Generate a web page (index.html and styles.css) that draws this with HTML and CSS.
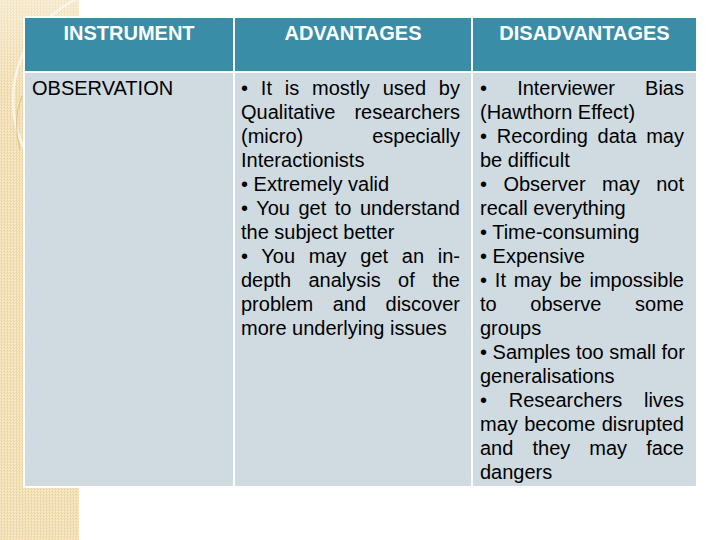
FILE: index.html
```html
<!DOCTYPE html>
<html lang="en">
<head>
<meta charset="utf-8">
<title>Observation</title>
<link rel="stylesheet" href="styles.css">
</head>
<body>
<div class="deco">
  <svg class="arc" width="79" height="540" viewBox="0 0 79 540">
    <circle cx="125" cy="100" r="112" fill="none" stroke="#fbf6ec" stroke-width="2.5" opacity="0.9"/>
    <path d="M22 96 Q12 120 20 150" fill="none" stroke="#d8c08e" stroke-width="1"/>
  </svg>
</div>
<div class="table">
  <div class="cell head">INSTRUMENT</div>
  <div class="cell head">ADVANTAGES</div>
  <div class="cell head">DISADVANTAGES</div>
  <div class="cell body c1">OBSERVATION</div>
  <div class="cell body c2">
    <div class="ln j">• It is mostly used by</div>
    <div class="ln j">Qualitative researchers</div>
    <div class="ln j">(micro) especially</div>
    <div class="ln">Interactionists</div>
    <div class="ln">• Extremely valid</div>
    <div class="ln j">• You get to understand</div>
    <div class="ln">the subject better</div>
    <div class="ln j">• You may get an in-</div>
    <div class="ln j">depth analysis of the</div>
    <div class="ln j">problem and discover</div>
    <div class="ln">more underlying issues</div>
  </div>
  <div class="cell body c3">
    <div class="ln j">• Interviewer Bias</div>
    <div class="ln">(Hawthorn Effect)</div>
    <div class="ln j">• Recording data may</div>
    <div class="ln">be difficult</div>
    <div class="ln j">• Observer may not</div>
    <div class="ln">recall everything</div>
    <div class="ln">• Time-consuming</div>
    <div class="ln">• Expensive</div>
    <div class="ln j">• It may be impossible</div>
    <div class="ln j">to observe some</div>
    <div class="ln">groups</div>
    <div class="ln j">• Samples too small for</div>
    <div class="ln">generalisations</div>
    <div class="ln j">• Researchers lives</div>
    <div class="ln j">may become disrupted</div>
    <div class="ln j">and they may face</div>
    <div class="ln">dangers</div>
  </div>
</div>
</body>
</html>
```
FILE: styles.css
```css
html, body {
  margin: 0;
}
body {
  position: relative;
  width: 720px;
  height: 540px;
  box-sizing: border-box;
  padding: 16px 0 0 23px;
  background: #ffffff;
  overflow: hidden;
  font-family: "Liberation Sans", Arial, sans-serif;
}
.deco {
  position: absolute;
  left: 0;
  top: 0;
  width: 79px;
  height: 540px;
  background:
    linear-gradient(to bottom, rgba(255,255,255,0.35), rgba(255,255,255,0) 90px),
    repeating-conic-gradient(#eed8a6 0 25%, #f7e9cb 0 50%) 0 0 / 3px 3px;
}
.arc {
  display: block;
}
.table {
  position: relative;
  display: grid;
  grid-template-columns: 208px 236px 223px;
  grid-template-rows: 53px 413px;
  gap: 2px;
  padding: 2px;
  width: max-content;
  background: #ffffff;
}
.cell {
  box-sizing: border-box;
  font-size: 20px;
  line-height: 24px;
}
.head {
  background: #3a8da6;
  color: #ffffff;
  font-weight: bold;
  text-align: center;
  padding-top: 3px;
}
.body {
  background: #cfdbe1;
  color: #000000;
  padding-top: 3px;
}
.c1 {
  padding-left: 7px;
}
.c2 {
  padding-left: 6px;
  padding-right: 11px;
}
.c3 {
  padding-left: 7px;
  padding-right: 12px;
}
.ln {
  white-space: nowrap;
  text-align: left;
}
.ln.j {
  text-align: justify;
  text-align-last: justify;
}
```
